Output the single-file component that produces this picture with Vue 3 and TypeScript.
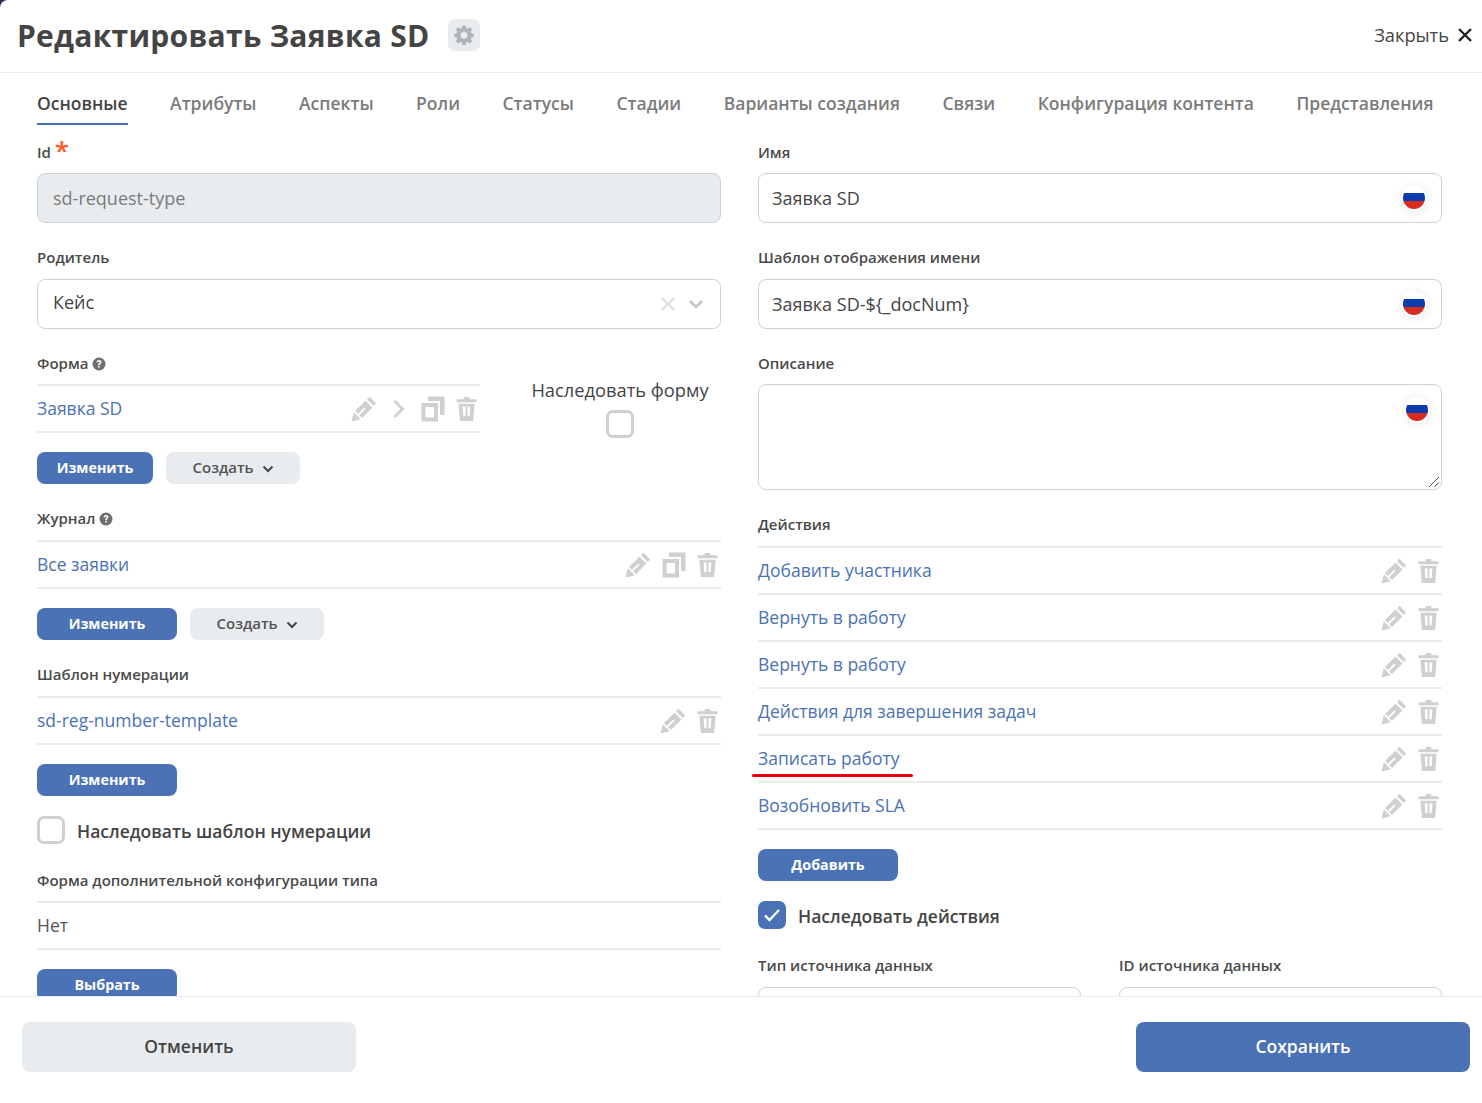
<script setup lang="ts">
const tabs = [
  "Основные",
  "Атрибуты",
  "Аспекты",
  "Роли",
  "Статусы",
  "Стадии",
  "Варианты создания",
  "Связи",
  "Конфигурация контента",
  "Представления",
];

const actions = [
  "Добавить участника",
  "Вернуть в работу",
  "Вернуть в работу",
  "Действия для завершения задач",
  "Записать работу",
  "Возобновить SLA",
];
</script>

<template>
  <div class="modal">
    <svg width="0" height="0" class="defs">
      <defs>
        <symbol id="i-pencil" viewBox="0 0 26 26">
          <path d="M18.500.8 25.200 7.500 22.700 10 16 3.300Z" />
          <path fill-rule="evenodd" d="M14.500 4.500 21.500 11.500 11 22 4 15ZM6.800 17.900 8.100 19.200 14.600 12.700 13.300 11.400Z" />
          <path d="M2.800 16.200 9.800 23.200 0.500 25.500Z" />
        </symbol>
        <symbol id="i-trash" viewBox="0 0 22 26">
          <path d="M8 0.500H14V2.800H21.500V6H0.500V2.800H8Z" />
          <path fill-rule="evenodd" d="M2.500 7.500H19.500L18 25.500H4ZM7 10.500 7.700 20.500H10V10.500ZM12 10.500V20.500H14.300L15 10.500Z" />
        </symbol>
        <symbol id="i-copy" viewBox="0 0 24 26">
          <path d="M7 0.500H23.500V19H19V5H7Z" />
          <path fill-rule="evenodd" d="M0.500 7H17V25.500H0.500ZM4.500 11V21.500H13V11Z" />
        </symbol>
        <symbol id="i-help" viewBox="0 0 14 14">
          <circle cx="7" cy="7" r="6.500" />
          <path d="M4.600 5.300C4.700 3.900 5.700 3 7.100 3 8.500 3 9.500 3.900 9.500 5.100 9.500 6 9 6.500 8.300 7 7.800 7.300 7.700 7.500 7.700 8.100H6.200C6.200 7.100 6.500 6.600 7.200 6.100 7.700 5.800 7.900 5.600 7.900 5.200 7.900 4.800 7.600 4.500 7.100 4.500 6.600 4.500 6.300 4.800 6.200 5.300Z" fill="#fff" />
          <rect x="6.100" y="8.800" width="1.700" height="1.700" fill="#fff" />
        </symbol>
      </defs>
    </svg>

    <header class="head">
      <h1 class="head__title">Редактировать Заявка SD</h1>
      <button class="head__gear" type="button">
        <svg width="20" height="20" viewBox="0 0 20 20">
          <path
            fill-rule="evenodd"
            d="M8.300 0.500H11.700L12.200 3.100 13.700 3.700 15.900 2.200 18.200 4.600 16.700 6.700 17.300 8.200 19.800 8.700V11.900L17.300 12.400 16.700 13.900 18.200 16 15.900 18.400 13.700 16.900 12.200 17.500 11.700 20H8.300L7.800 17.500 6.300 16.900 4.100 18.400 1.800 16 3.300 13.900 2.700 12.400 0.200 11.900V8.700L2.700 8.200 3.300 6.700 1.800 4.600 4.100 2.200 6.300 3.700 7.800 3.100ZM10 6.800A3.500 3.500 0 1 0 10 13.800 3.500 3.500 0 1 0 10 6.800Z"
          />
        </svg>
      </button>
      <div class="head__close">
        <span class="head__close-text">Закрыть</span>
        <svg width="14" height="14" viewBox="0 0 14 14">
          <path d="M1 1 13 13M13 1 1 13" />
        </svg>
      </div>
    </header>

    <nav class="tabs">
      <a
        v-for="(tab, i) in tabs"
        :key="tab"
        class="tabs__item"
        :class="{ 'tabs__item--active': i === 0 }"
      >{{ tab }}</a>
    </nav>

    <main class="body">
      <section class="col">
        <div class="field">
          <label class="label label--tight">Id <span class="label__req">*</span></label>
          <div class="input input--off">sd-request-type</div>
        </div>

        <div class="field">
          <label class="label">Родитель</label>
          <div class="input input--select">
            <span>Кейс</span>
            <span class="select-icons">
              <svg width="16" height="16" viewBox="0 0 16 16" class="x-soft">
                <path d="M1.500 1.500 14.500 14.500M14.500 1.500 1.500 14.500" />
              </svg>
              <svg width="16" height="10" viewBox="0 0 16 10" class="chev-soft">
                <path d="M2 2 8 8 14 2" />
              </svg>
            </span>
          </div>
        </div>

        <div class="form-row">
          <div class="form-row__main">
            <label class="label">Форма
              <svg class="help" width="14" height="14"><use href="#i-help" /></svg>
            </label>
            <div class="list list--form">
              <div class="list__row">
                <a class="link">Заявка SD</a>
                <span class="tools">
                  <svg class="tool" width="26" height="26"><use href="#i-pencil" /></svg>
                  <svg class="tool-chev" width="14" height="20" viewBox="0 0 14 20">
                    <path d="M2.500 2 10.500 10 2.500 18" />
                  </svg>
                  <svg class="tool" width="24" height="26"><use href="#i-copy" /></svg>
                  <svg class="tool" width="21" height="26"><use href="#i-trash" /></svg>
                </span>
              </div>
            </div>
            <div class="btns">
              <button class="btn btn--primary btn--form" type="button">Изменить</button>
              <button class="btn btn--light" type="button">
                Создать
                <svg width="12" height="8" viewBox="0 0 12 8"><path d="M1.500 1.500 6 6 10.500 1.500" /></svg>
              </button>
            </div>
          </div>
          <div class="form-row__side">
            <span class="form-row__text">Наследовать форму</span>
            <span class="check check--small"></span>
          </div>
        </div>

        <div class="field field--list">
          <label class="label">Журнал
            <svg class="help" width="14" height="14"><use href="#i-help" /></svg>
          </label>
          <div class="list">
            <div class="list__row">
              <a class="link">Все заявки</a>
              <span class="tools">
                <svg class="tool" width="26" height="26"><use href="#i-pencil" /></svg>
                <svg class="tool" width="24" height="26"><use href="#i-copy" /></svg>
                <svg class="tool" width="21" height="26"><use href="#i-trash" /></svg>
              </span>
            </div>
          </div>
          <div class="btns">
            <button class="btn btn--primary" type="button">Изменить</button>
            <button class="btn btn--light" type="button">
              Создать
              <svg width="12" height="8" viewBox="0 0 12 8"><path d="M1.500 1.500 6 6 10.500 1.500" /></svg>
            </button>
          </div>
        </div>

        <div class="field field--list">
          <label class="label">Шаблон нумерации</label>
          <div class="list">
            <div class="list__row">
              <a class="link">sd-reg-number-template</a>
              <span class="tools">
                <svg class="tool" width="26" height="26"><use href="#i-pencil" /></svg>
                <svg class="tool" width="21" height="26"><use href="#i-trash" /></svg>
              </span>
            </div>
          </div>
          <div class="btns">
            <button class="btn btn--primary" type="button">Изменить</button>
          </div>
        </div>

        <div class="inherit">
          <span class="check"></span>
          <span class="inherit__text">Наследовать шаблон нумерации</span>
        </div>

        <div class="field field--after">
          <label class="label label--tight">Форма дополнительной конфигурации типа</label>
          <div class="list">
            <div class="list__row">
              <span class="plain">Нет</span>
            </div>
          </div>
          <div class="btns">
            <button class="btn btn--primary" type="button">Выбрать</button>
          </div>
        </div>
      </section>

      <section class="col">
        <div class="field">
          <label class="label label--tight">Имя</label>
          <div class="input input--dark">
            <span>Заявка SD</span>
            <span class="flag"></span>
          </div>
        </div>

        <div class="field">
          <label class="label">Шаблон отображения имени</label>
          <div class="input input--dark">
            <span>Заявка SD-${_docNum}</span>
            <span class="flag"></span>
          </div>
        </div>

        <div class="field">
          <label class="label label--tight">Описание</label>
          <div class="area">
            <span class="flag flag--area"></span>
            <svg class="area__grip" width="12" height="12" viewBox="0 0 12 12">
              <path d="M1 11 11 1M6.500 11 11 6.500" />
            </svg>
          </div>
        </div>

        <div class="field field--list">
          <label class="label">Действия</label>
          <div class="list">
            <div v-for="(a, i) in actions" :key="i" class="list__row">
              <a class="link">{{ a }}</a>
              <span v-if="i === 4" class="mark"></span>
              <span class="tools">
                <svg class="tool" width="26" height="26"><use href="#i-pencil" /></svg>
                <svg class="tool" width="21" height="26"><use href="#i-trash" /></svg>
              </span>
            </div>
          </div>
          <div class="btns">
            <button class="btn btn--primary" type="button">Добавить</button>
          </div>
        </div>

        <div class="inherit">
          <span class="check check--on">
            <svg width="18" height="14" viewBox="0 0 18 14"><path d="M2 7.500 6.500 12 16 2" /></svg>
          </span>
          <span class="inherit__text">Наследовать действия</span>
        </div>

        <div class="pair">
          <div>
            <label class="label">Тип источника данных</label>
            <div class="input"></div>
          </div>
          <div>
            <label class="label">ID источника данных</label>
            <div class="input"></div>
          </div>
        </div>
      </section>
    </main>

    <footer class="foot">
      <button class="foot__btn foot__btn--cancel" type="button">Отменить</button>
      <button class="foot__btn foot__btn--save" type="button">Сохранить</button>
    </footer>
  </div>
</template>

<style scoped>
.defs {
  position: absolute;
}
.modal {
  height: 1103px;
  display: flex;
  flex-direction: column;
  overflow: hidden;
  background: #fff;
  border-top-left-radius: 8px;
  color: #444;
  font-family: "Open Sans", sans-serif;
}
.head {
  flex: none;
  height: 73px;
  box-sizing: border-box;
  border-bottom: 1px solid #e8ecef;
  display: flex;
  align-items: center;
  padding: 0 10px 2px 17px;
}
.head__title {
  margin: 0;
  font-size: 30px;
  font-weight: 700;
  letter-spacing: 0.28px;
  color: #444;
}
.head__gear {
  width: 32px;
  height: 32px;
  margin-left: 18px;
  padding: 0;
  border: 0;
  border-radius: 7px;
  background: #e8ecef;
  display: flex;
  align-items: center;
  justify-content: center;
}
.head__gear svg {
  fill: #b4b4b4;
}
.head__close {
  margin-left: auto;
  display: flex;
  align-items: center;
  gap: 9px;
  font-size: 18.300px;
}
.head__close-text {
  padding-bottom: 2px;
}
.head__close svg {
  stroke: #222;
  stroke-width: 2.400;
  fill: none;
}
.tabs {
  flex: none;
  height: 52px;
  box-sizing: border-box;
  padding: 0 0 0 37px;
  display: flex;
  gap: 42.500px;
}
.tabs__item {
  height: 52px;
  line-height: 61px;
  box-sizing: border-box;
  font-size: 17.500px;
  font-weight: 600;
  color: #7b7b7b;
  white-space: nowrap;
}
.tabs__item--active {
  color: #444;
  border-bottom: 2px solid #4a72b5;
}
.body {
  flex: 1;
  min-height: 0;
  overflow: hidden;
  display: grid;
  grid-template-columns: 684px 684px;
  column-gap: 37px;
  padding: 17px 40px 0 37px;
}
.field {
  margin-bottom: 24px;
}
.field--list {
  margin-top: 24px;
  margin-bottom: 0;
}
.field--after {
  margin-top: 26px;
}
.label {
  display: block;
  height: 20px;
  line-height: 20px;
  margin-bottom: 12px;
  font-size: 15px;
  font-weight: 600;
  color: #4a4a4a;
  white-space: nowrap;
}
.label--tight {
  margin-bottom: 11px;
}
.label__req {
  color: #ff5a1f;
  font-size: 26px;
  line-height: 0;
  vertical-align: -2px;
}
.help {
  fill: #6f6f6f;
  vertical-align: -2px;
}
.input {
  height: 50px;
  box-sizing: border-box;
  border: 1px solid #cfd2d4;
  border-radius: 8px;
  padding: 0 15px;
  display: flex;
  align-items: center;
  justify-content: space-between;
  font-size: 18px;
  font-weight: 500;
  color: #444;
}
.input--off {
  background: #e8ecef;
  color: #7b7b7b;
}
.input--select {
  padding-bottom: 4px;
}
.input--dark {
  padding: 0 16px 0 13px;
}
.select-icons {
  display: flex;
  align-items: center;
  gap: 12px;
  margin: 4px 1px 0 0;
}
.x-soft {
  stroke: #e2e2e2;
  stroke-width: 2.500;
  fill: none;
}
.chev-soft {
  stroke: #c4c4c4;
  stroke-width: 2.500;
  fill: none;
}
.flag {
  width: 22px;
  height: 22px;
  border-radius: 50%;
  background: linear-gradient(#fff 0 27%, #0a3cae 27% 64%, #d92b1e 64% 100%);
  box-shadow: 0 0 0 2px #fff, 0 1px 8px 3px rgba(0, 0, 0, 0.08);
}
.flag--area {
  position: absolute;
  top: 14px;
  right: 13px;
}
.area {
  position: relative;
  height: 106px;
  box-sizing: border-box;
  border: 1px solid #cfd2d4;
  border-radius: 8px;
}
.area__grip {
  position: absolute;
  right: 1px;
  bottom: 1px;
  stroke: #555;
  stroke-width: 1;
  fill: none;
}
.list {
  border-bottom: 2px solid #e8ecef;
}
.list--form {
  margin-top: -1px;
}
.list__row {
  position: relative;
  height: 47px;
  box-sizing: border-box;
  border-top: 2px solid #e8ecef;
  padding-bottom: 2px;
  display: flex;
  align-items: center;
  justify-content: space-between;
}
.link {
  font-size: 17.500px;
  color: #4a72b5;
}
.plain {
  font-size: 17.500px;
  color: #555;
}
.mark {
  position: absolute;
  left: -6px;
  top: 38px;
  width: 161px;
  height: 3px;
  border-radius: 2px;
  background: #e8000a;
}
.tools {
  display: flex;
  align-items: center;
  gap: 11px;
  margin: 2px 3px 0 0;
}
.tool {
  fill: #d0d0d0;
}
.tool-chev {
  margin: 0 4px;
  stroke: #d0d0d0;
  stroke-width: 3;
  fill: none;
}
.form-row {
  display: grid;
  grid-template-columns: 443px 1fr;
}
.form-row__side {
  display: flex;
  flex-direction: column;
  align-items: center;
  padding: 25px 0 0 39px;
}
.form-row__text {
  font-size: 18.300px;
  line-height: 24px;
  font-weight: 500;
  margin-bottom: 8px;
  white-space: nowrap;
}
.btns {
  display: flex;
  gap: 13px;
  margin-top: 19px;
}
.btn {
  height: 32px;
  border: 0;
  border-radius: 8px;
  font-family: inherit;
  font-size: 14.300px;
  padding: 0 0 1px;
}
.btn--primary {
  width: 140px;
  background: #4a72b5;
  color: #fff;
  font-weight: 700;
}
.btn--form {
  width: 116px;
}
.btn--light {
  width: 134px;
  padding-bottom: 2px;
  background: #e8ecef;
  color: #555;
  font-size: 15px;
  font-weight: 600;
}
.btn--light svg {
  margin-left: 4px;
  stroke: #444;
  stroke-width: 2;
  fill: none;
}
.check {
  flex: none;
  width: 28px;
  height: 28px;
  box-sizing: border-box;
  border: 3px solid #d0d0d0;
  border-radius: 7px;
  background: #fff;
  display: flex;
  align-items: center;
  justify-content: center;
}
.check--on {
  background: #4a72b5;
  border-color: #4a72b5;
}
.check--on svg {
  stroke: #fff;
  stroke-width: 2.400;
  fill: none;
}
.inherit {
  display: flex;
  align-items: center;
  gap: 12px;
  margin-top: 20px;
}
.inherit__text {
  margin-top: 2px;
  font-size: 17.500px;
  font-weight: 600;
}
.pair {
  display: grid;
  grid-template-columns: 323px 323px;
  column-gap: 38px;
  margin-top: 26px;
}
.foot {
  flex: none;
  height: 107px;
  box-sizing: border-box;
  border-top: 1px solid #e8ecef;
  padding: 25px 12px 0 22px;
  display: flex;
  justify-content: space-between;
  align-items: flex-start;
  background: #fff;
  position: relative;
}
.foot__btn {
  width: 334px;
  height: 50px;
  border: 0;
  border-radius: 8px;
  padding: 0 0 2px;
  font-family: inherit;
  font-size: 17.500px;
  font-weight: 600;
}
.foot__btn--cancel {
  background: #e8ecef;
  color: #444;
}
.foot__btn--save {
  background: #4a72b5;
  color: #fff;
}
</style>

<style>
html,
body {
  margin: 0;
  background: #27344d;
  overflow: hidden;
}
</style>
